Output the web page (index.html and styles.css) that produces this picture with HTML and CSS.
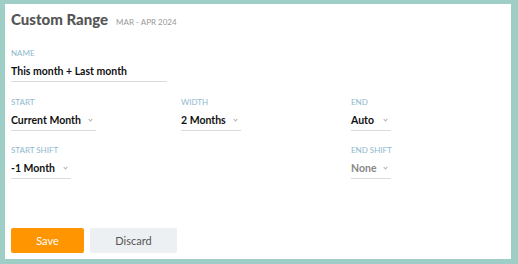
FILE: index.html
```html
<!DOCTYPE html>
<html lang="en">
<head>
    <meta charset="UTF-8">
    <title>Custom Range</title>
    <link rel="stylesheet" href="styles.css">
</head>
<body>
    <div class="panel">
        <div class="header">
            <h1>Custom Range</h1>
            <span class="period">MAR - APR 2024</span>
        </div>
        <div class="field name-field">
            <label>NAME</label>
            <div class="text-input">This month + Last month</div>
        </div>
        <div class="grid">
            <div class="field">
                <label>START</label>
                <div class="select select-start">Current Month <span class="chev"></span></div>
            </div>
            <div class="field">
                <label>WIDTH</label>
                <div class="select select-width">2 Months <span class="chev"></span></div>
            </div>
            <div class="field">
                <label>END</label>
                <div class="select select-end">Auto <span class="chev"></span></div>
            </div>
            <div class="field">
                <label>START SHIFT</label>
                <div class="select select-shift">-1 Month <span class="chev"></span></div>
            </div>
            <div class="field"></div>
            <div class="field">
                <label>END SHIFT</label>
                <div class="select select-end disabled">None <span class="chev"></span></div>
            </div>
        </div>
        <div class="actions">
            <button class="btn save">Save</button>
            <button class="btn discard">Discard</button>
        </div>
    </div>
</body>
</html>
```

FILE: styles.css
```css
body {
    margin: 0;
    background-color: #9ecec6;
    font-family: Lato, "Open Sans", sans-serif;
    height: 264px;
    padding: 4px 7px 5px 5px;
    box-sizing: border-box;
}
.panel {
    background-color: #ffffff;
    height: 100%;
    padding: 6px 6px 0 6px;
    box-sizing: border-box;
    display: flex;
    flex-direction: column;
}
.header {
    display: flex;
    align-items: baseline;
    gap: 8px;
}
h1 {
    margin: 0;
    font-size: 15px;
    font-weight: 900;
    color: #555555;
}
.period {
    font-size: 8px;
    color: #999999;
}
.field {
    display: flex;
    flex-direction: column;
    align-items: flex-start;
}
.field label {
    font-size: 8px;
    line-height: 10px;
    color: #8db8ce;
    margin-bottom: 7px;
}
.name-field {
    margin-top: 20px;
}
.text-input {
    width: 156px;
    font-size: 10.5px;
    line-height: 13px;
    font-weight: 700;
    color: #111111;
    padding-bottom: 3px;
    border-bottom: 1px solid #d8dcdc;
}
.grid {
    margin-top: 15px;
    display: grid;
    grid-template-columns: 170px 170px 1fr;
    row-gap: 14px;
}
.select {
    display: flex;
    align-items: center;
    justify-content: space-between;
    font-size: 10.5px;
    line-height: 13px;
    font-weight: 700;
    color: #111111;
    padding-bottom: 3px;
    border-bottom: 1px solid #d8dcdc;
    box-sizing: border-box;
}
.select-start { width: 85px; }
.select-width { width: 60px; }
.select-end { width: 40px; }
.select-shift { width: 60px; }
.select.disabled { color: #888888; }
.chev {
    width: 2px;
    height: 2px;
    border-right: 1px solid #b0b0b0;
    border-bottom: 1px solid #b0b0b0;
    transform: rotate(45deg);
    margin: 0 4px 2px 0;
}
.actions {
    margin-top: auto;
    margin-bottom: 6px;
    display: flex;
    gap: 6px;
}
.btn {
    height: 25px;
    border: none;
    border-radius: 2px;
    font-family: Lato, "Open Sans", sans-serif;
    font-size: 11px;
    cursor: pointer;
}
.save {
    width: 73px;
    background-color: #ff9500;
    color: #ffffff;
}
.discard {
    width: 87px;
    background-color: #edf0f3;
    color: #555555;
}
```
